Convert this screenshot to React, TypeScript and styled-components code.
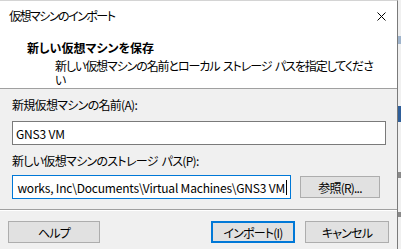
import React from 'react'
import styled, {createGlobalStyle} from 'styled-components'

const GlobalStyle = createGlobalStyle`
  html, body {
    margin: 0;
    padding: 0;
    background: #f0f0f0;
  }
  body {
    font-family: "Noto Sans CJK JP", "Noto Sans", sans-serif;
    font-size: 12px;
    color: #000;
    font-feature-settings: "palt";
  }
`

const Screen = styled.div`
  display: flex;
  width: 401px;
  height: 249px;
  overflow: hidden;
`

const Dialog = styled.div`
  display: flex;
  flex-direction: column;
  width: 397px;
  flex-shrink: 0;
  background: #f0f0f0;
  border-right: 1px solid #7a7a7a;
  border-top: 1px solid #d4d4d4;
`

const TitleBar = styled.div`
  display: flex;
  align-items: center;
  justify-content: space-between;
  height: 30px;
  padding: 0 10px 0 9px;
  background: #fff;
`

const TitleText = styled.span`
  line-height: 14px;
  letter-spacing: -1.5px;
`

const CloseButton = styled.span`
  display: flex;
  width: 9px;
  height: 9px;
  margin-right: 1px;
`

const Header = styled.div`
  height: 58px;
  padding: 9px 0 0 27px;
  box-sizing: border-box;
  background: #fff;
  border-bottom: 1px solid #a0a0a0;
  overflow: hidden;
`

const HeaderTitle = styled.div`
  font-weight: 700;
  line-height: 16px;
`

const HeaderText = styled.div`
  margin: 3px 0 0 28px;
  line-height: 14px;
  letter-spacing: -1.1px;
  word-spacing: 2px;
  white-space: nowrap;
`

const Body = styled.div`
  display: flex;
  flex-direction: column;
  padding: 8px 11px 0 12px;
`

const Label = styled.div`
  line-height: 16px;
  letter-spacing: -0.7px;
  word-spacing: 2px;
`

const Row = styled.div`
  display: flex;
  align-items: center;
  gap: 9px;
`

const Field = styled.div<{ $focused?: boolean; $width?: number }>`
  display: flex;
  align-items: center;
  justify-content: ${p => (p.$focused ? 'flex-end' : 'flex-start')};
  height: 24px;
  box-sizing: border-box;
  width: ${p => (p.$width ? `${p.$width}px` : '100%')};
  padding: 0 3px;
  background: #fff;
  border: 1px solid ${p => (p.$focused ? '#0078d7' : '#7a7a7a')};
  white-space: nowrap;
  overflow: hidden;
  letter-spacing: -0.2px;
`

const Caret = styled.span`
  display: inline-block;
  flex-shrink: 0;
  width: 1px;
  height: 15px;
  background: #000;
  margin-left: 1px;
`

const Button = styled.div<{ $width: number; $primary?: boolean }>`
  display: flex;
  align-items: center;
  justify-content: center;
  width: ${p => p.$width}px;
  height: 22px;
  box-sizing: border-box;
  background: #e1e1e1;
  border: ${p => (p.$primary ? '2px solid #0078d7' : '1px solid #adadad')};
  letter-spacing: -0.8px;
`

const Separator = styled.div`
  height: 1px;
  background: #a0a0a0;
  border-bottom: 1px solid #fff;
`

const Footer = styled.div`
  display: flex;
  align-items: center;
  padding: 10px 8px 0 8px;
`

const Spacer = styled.div`
  flex: 1;
`

const BackWindow = styled.div`
  display: flex;
  flex-direction: column;
  flex: 1;
  background: #f0f0f0;
`

const BackPiece = styled.div<{ $top: number; $height: number; $color: string }>`
  margin-top: ${p => p.$top}px;
  height: ${p => p.$height}px;
  background: ${p => p.$color};
`

export default function App() {
  return (
    <Screen>
      <GlobalStyle />
      <Dialog>
        <TitleBar>
          <TitleText>仮想マシンのインポート</TitleText>
          <CloseButton>
            <svg width="9" height="9" viewBox="0 0 9 9">
              <path d="M0.5 0.5 L8.5 8.5 M8.5 0.5 L0.5 8.5" stroke="#000" strokeWidth="1" />
            </svg>
          </CloseButton>
        </TitleBar>

        <Header>
          <HeaderTitle>新しい仮想マシンを保存</HeaderTitle>
          <HeaderText>
            新しい仮想マシンの名前とローカル ストレージ パスを指定してくださ
            <br />い
          </HeaderText>
        </Header>

        <Body>
          <Label>新規仮想マシンの名前(A):</Label>
          <Field style={{marginTop: 8}}>GNS3 VM</Field>
          <Label style={{marginTop: 8}}>新しい仮想マシンのストレージ パス(P):</Label>
          <Row style={{marginTop: 6}}>
            <Field $focused $width={279}>
              works, Inc\Documents\Virtual Machines\GNS3 VM
              <Caret />
            </Field>
            <Button $width={80}>参照(R)...</Button>
          </Row>
        </Body>

        <div style={{marginTop: 10}}>
          <Separator />
        </div>

        <Footer>
          <Button $width={92}>ヘルプ</Button>
          <Spacer />
          <Button $width={84} $primary>インポート(I)</Button>
          <Button $width={84} style={{marginLeft: 10}}>キャンセル</Button>
        </Footer>
      </Dialog>

      <BackWindow>
        <BackPiece $top={36} $height={8} $color="#9fb4cc" />
        <BackPiece $top={62} $height={16} $color="#2f5f9a" />
        <BackPiece $top={50} $height={6} $color="#8a8a8a" />
        <BackPiece $top={34} $height={5} $color="#8a8a8a" />
      </BackWindow>
    </Screen>
  )
}
